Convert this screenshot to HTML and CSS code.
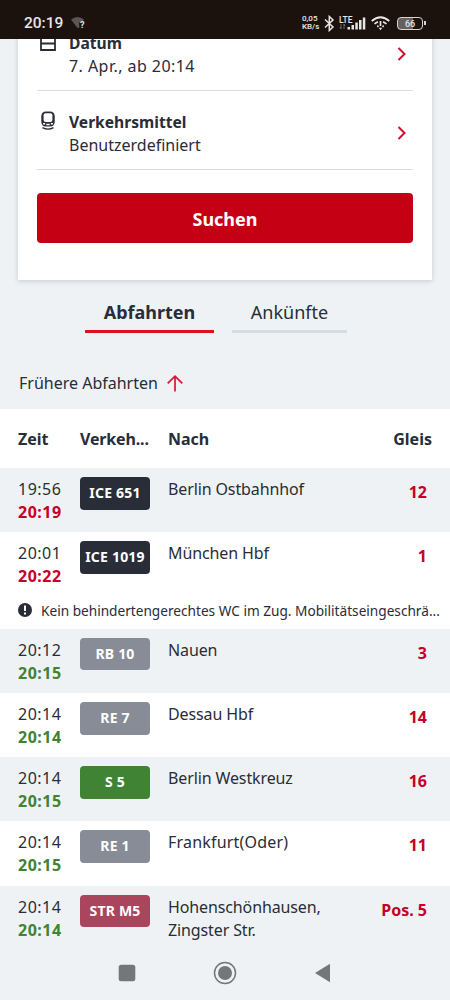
FILE: index.html
```html
<!DOCTYPE html>
<html lang="de">
<head>
  <meta charset="UTF-8" />
  <meta name="viewport" content="width=device-width, initial-scale=1.0"/>
  <title>Abfahrten</title>
  <link rel="stylesheet" href="styles.css">
</head>

<body>
  <header class="status-bar">
    <span class="clock">20:19</span>
    <svg class="wifi-unknown" width="16" height="14" viewBox="0 0 16 14">
      <path d="M0 3.500Q6.500 -1.500 13 3.500L12 5Q8 5 8 8L8.500 11.500L6.500 12Z" fill="#5c5552"/>
      <text x="9" y="12" class="wifi-mark">?</text>
    </svg>
    <div class="status-icons">
      <div class="net-speed"><span>0,05</span><span>KB/s</span></div>
      <svg width="11" height="17" viewBox="0 0 11 17" fill="none" stroke="#e9e6e4" stroke-width="1.500">
        <path d="M1 4.500L9 12L5.300 15.500V1.500L9 5L1 12.500"/>
      </svg>
      <svg class="signal" width="28" height="17" viewBox="0 0 28 17">
        <text x="0" y="7.500" class="lte">LTE</text>
        <path d="M2 9v5M1 12l1 2M5 14V9l1 2" stroke="#6f6966" stroke-width="1" fill="none"/>
        <g fill="#e9e6e4">
          <rect x="8.500" y="12" width="2.500" height="2.500"/>
          <rect x="12.500" y="10" width="2.500" height="4.500"/>
          <rect x="16.300" y="7.500" width="2.500" height="7"/>
          <rect x="20" y="5" width="2.500" height="9.500"/>
          <rect x="23.800" y="2.500" width="2.500" height="12"/>
        </g>
      </svg>
      <svg class="wifi" width="19" height="15" viewBox="0 0 19 15" fill="none" stroke="#e9e6e4" stroke-width="1.700">
        <path d="M.7 5Q9.500 -2.500 18.300 5M3.600 8Q5 6.500 7 5.900M12 5.900Q14 6.500 15.400 8M6.300 10.700L7.500 9.800M12.700 10.700L11.500 9.800M9.500 5v5"/>
        <path d="M7.700 11.700h3.600l-1.800 2.500z" fill="#e9e6e4" stroke="none"/>
      </svg>
      <div class="battery">66</div>
    </div>
  </header>

  <main class="content">
    <section class="search-card">
      <div class="option">
        <svg class="option-icon" width="18" height="20" viewBox="0 0 18 20" fill="none" stroke="#282d37" stroke-width="1.800">
          <path d="M2 3h14v15H2zM2 11.500h14"/>
        </svg>
        <div class="option-text">
          <strong>Datum</strong>
          <span class="date">7. Apr., ab 20:14</span>
        </div>
        <svg class="chevron" width="10" height="14" viewBox="0 0 10 14"><path d="M1.500 1L7.500 7L1.500 13"/></svg>
      </div>
      <div class="option">
        <svg class="option-icon" width="18" height="20" viewBox="0 0 18 20">
          <rect x="2.300" y=".5" width="13.400" height="15" rx="4.500" fill="#282d37"/>
          <rect x="4.600" y="2.300" width="8.800" height="8.700" rx="2" fill="#fff"/>
          <path d="M4 12.800h2.200M11.800 12.800H14M7.300 13.400h3.400" stroke="#fff" stroke-width="1.500"/>
          <path d="M3.500 16.600Q9 19.600 14.500 16.600" fill="none" stroke="#282d37" stroke-width="1.200"/>
        </svg>
        <div class="option-text">
          <strong>Verkehrsmittel</strong>
          <span>Benutzerdefiniert</span>
        </div>
        <svg class="chevron" width="10" height="14" viewBox="0 0 10 14"><path d="M1.500 1L7.500 7L1.500 13"/></svg>
      </div>
      <button type="button" class="search-button">Suchen</button>
    </section>

    <nav class="tabs">
      <div class="tab active">Abfahrten</div>
      <div class="tab">Ankünfte</div>
    </nav>

    <div class="earlier">
      <span>Frühere Abfahrten</span>
      <svg width="16" height="17" viewBox="0 0 16 17" fill="none" stroke="#db1430" stroke-width="1.700">
        <path d="M8 16.500V1.200M.7 8.300L8 1.200L15.300 8.300"/>
      </svg>
    </div>

    <section class="board">
      <div class="row head">
        <div>Zeit</div>
        <div class="head-train">Verkeh...</div>
        <div>Nach</div>
        <div class="head-track">Gleis</div>
      </div>

      <div class="row shaded">
        <div class="time">19:56<b class="late">20:19</b></div>
        <div class="badge ice">ICE 651</div>
        <div class="dest">Berlin Ostbahnhof</div>
        <div class="track">12</div>
      </div>

      <div class="row">
        <div class="time">20:01<b class="late">20:22</b></div>
        <div class="badge ice">ICE 1019</div>
        <div class="dest">München Hbf</div>
        <div class="track">1</div>
      </div>
      <div class="notice">
        <svg width="14" height="14" viewBox="0 0 14 14">
          <circle cx="7" cy="7" r="7" fill="#282d37"/>
          <path d="M7 2.500v5.500M7 9.500v2" stroke="#fff" stroke-width="2"/>
        </svg>
        <span>Kein behindertengerechtes WC im Zug. Mobilitätseingeschrä...</span>
      </div>

      <div class="row shaded">
        <div class="time">20:12<b class="ontime">20:15</b></div>
        <div class="badge regio">RB 10</div>
        <div class="dest">Nauen</div>
        <div class="track">3</div>
      </div>

      <div class="row">
        <div class="time">20:14<b class="ontime">20:14</b></div>
        <div class="badge regio">RE 7</div>
        <div class="dest">Dessau Hbf</div>
        <div class="track">14</div>
      </div>

      <div class="row shaded">
        <div class="time">20:14<b class="ontime">20:15</b></div>
        <div class="badge sbahn">S 5</div>
        <div class="dest">Berlin Westkreuz</div>
        <div class="track">16</div>
      </div>

      <div class="row">
        <div class="time">20:14<b class="ontime">20:15</b></div>
        <div class="badge regio">RE 1</div>
        <div class="dest wide">Frankfurt(Oder)</div>
        <div class="track">11</div>
      </div>

      <div class="row shaded">
        <div class="time">20:14<b class="ontime">20:14</b></div>
        <div class="badge tram">STR M5</div>
        <div class="dest">Hohenschönhausen, Zingster Str.</div>
        <div class="track">Pos. 5</div>
      </div>
    </section>
  </main>

  <footer class="nav-bar">
    <svg width="24" height="24" viewBox="0 0 24 24"><rect x="3.700" y="3.700" width="16.600" height="16.600" rx="2.500" fill="#73777a"/></svg>
    <svg width="24" height="24" viewBox="0 0 24 24">
      <circle cx="12" cy="12" r="10.500" fill="none" stroke="#73777a" stroke-width="1.500"/>
      <circle cx="12" cy="12" r="7" fill="#73777a"/>
    </svg>
    <svg width="24" height="24" viewBox="0 0 24 24"><path d="M4 12L19 2.800V21.200Z" fill="#73777a"/></svg>
  </footer>
</body>
</html>
```

FILE: styles.css
```css
* {
  box-sizing: border-box;
}

body {
  margin: 0;
  height: 1000px;
  display: flex;
  flex-direction: column;
  overflow: hidden;
  font-family: 'Noto Sans', sans-serif;
  font-size: 16px;
  line-height: 23px;
  color: #282d37;
  background: #eef2f5;
}

/* Phone status bar */
.status-bar {
  flex: none;
  display: flex;
  align-items: center;
  height: 39px;
  padding: 7px 24px 0 24px;
  background: #1b120e;
  color: #e9e6e4;
  font-family: Roboto, sans-serif;
}

.clock {
  width: 39px;
  font-size: 15.5px;
  font-weight: 500;
}

.wifi-unknown {
  margin-left: 8px;
}

.wifi-mark {
  font-size: 9px;
  font-weight: bold;
  fill: #e9e6e4;
}

.status-icons {
  margin-left: auto;
  display: flex;
  align-items: center;
}

.net-speed {
  display: flex;
  flex-direction: column;
  width: 22px;
  font-size: 8px;
  line-height: 8px;
  font-weight: 500;
}

.signal {
  margin-left: 4px;
}

.lte {
  font-size: 8.5px;
  font-weight: 500;
  fill: #e9e6e4;
}

.wifi {
  margin-left: 4px;
}

.battery {
  position: relative;
  width: 26px;
  height: 13px;
  margin-left: 7px;
  margin-right: 3px;
  border: 1.5px solid #d8d4d2;
  border-radius: 4px;
  background: linear-gradient(90deg, #67605d 64%, #1b120e 64%);
  font-size: 9px;
  font-weight: 500;
  line-height: 12px;
  text-align: center;
}

.battery::after {
  content: "";
  position: absolute;
  right: -4px;
  top: 3px;
  width: 2px;
  height: 4px;
  background: #d8d4d2;
}

.content {
  flex: 1;
  min-height: 0;
  overflow: hidden;
}

/* Search card, scrolled partly under the status bar */
.search-card {
  margin: -27px 18px 0;
  padding: 0 19px 37px;
  background: #fff;
  box-shadow: 0 1px 5px rgba(40, 45, 55, 0.2);
}

.option {
  display: flex;
  height: 79px;
  padding-top: 19.5px;
  border-bottom: 1px solid #d7dce1;
}

.option-icon {
  margin: 0 12px 0 2px;
}

.option-text {
  display: flex;
  flex-direction: column;
}

.option-text strong {
  font-size: 15.6px;
}

.date {
  letter-spacing: 0.45px;
}

.chevron {
  margin: 15px 6px 0 auto;
  fill: none;
  stroke: #cc1230;
  stroke-width: 2;
}

.search-button {
  display: block;
  width: 100%;
  height: 50px;
  margin-top: 23px;
  padding: 1px 0 0;
  border: none;
  border-radius: 4px;
  background: #c50014;
  color: #fff;
  font-family: inherit;
  font-size: 18px;
  font-weight: bold;
}

.tabs {
  display: flex;
  gap: 18px;
  margin: 18px 0 0 85px;
}

.tab {
  width: 115px;
  height: 35px;
  padding-top: 3px;
  border-bottom: 3px solid #d7dce1;
  font-size: 18px;
  text-align: center;
}

.tab.active {
  width: 129px;
  border-color: #db1226;
  font-weight: bold;
}

.earlier {
  display: flex;
  align-items: center;
  gap: 9px;
  height: 76px;
  padding: 24px 19px 0;
}

/* Departure board */
.board {
  background: #fff;
}

.row {
  display: grid;
  grid-template-columns: 62px 70px 180px 1fr;
  height: 64.2px;
  padding: 9px 23px 0 18px;
}

.row.head {
  height: 59px;
  padding: 19px 18px 0;
  font-weight: bold;
}

.head-train {
  letter-spacing: -0.15px;
}

.shaded {
  background: #eef2f5;
}

.time {
  padding-top: 1px;
  letter-spacing: 0.5px;
}

.time b {
  display: block;
}

.late {
  color: #c50028;
}

.ontime {
  color: #408335;
}

.badge {
  height: 32.5px;
  border-radius: 4px;
  color: #fff;
  font-size: 14px;
  font-weight: bold;
  letter-spacing: 0.2px;
  line-height: 32px;
  text-align: center;
  white-space: nowrap;
}

.ice {
  background: #282d37;
}

.regio {
  background: #878c96;
}

.sbahn {
  background: #408335;
}

.tram {
  background: #a9455d;
}

.dest,
.row.head div:nth-child(3) {
  padding-left: 18px;
}

.dest {
  padding-top: 1px;
  letter-spacing: -0.12px;
}

.dest.wide {
  letter-spacing: 0.2px;
}

.track,
.head-track {
  text-align: right;
}

.track {
  padding-top: 4px;
  color: #c50028;
  font-weight: bold;
}

.notice {
  display: flex;
  align-items: center;
  gap: 9px;
  height: 32.5px;
  padding: 0 10px 5px 18px;
  font-size: 13.65px;
  white-space: nowrap;
}

.notice svg {
  flex: none;
}

/* Android navigation */
.nav-bar {
  flex: none;
  display: flex;
  justify-content: center;
  align-items: center;
  gap: 74px;
  height: 54px;
  background: #eef2f5;
}
```
